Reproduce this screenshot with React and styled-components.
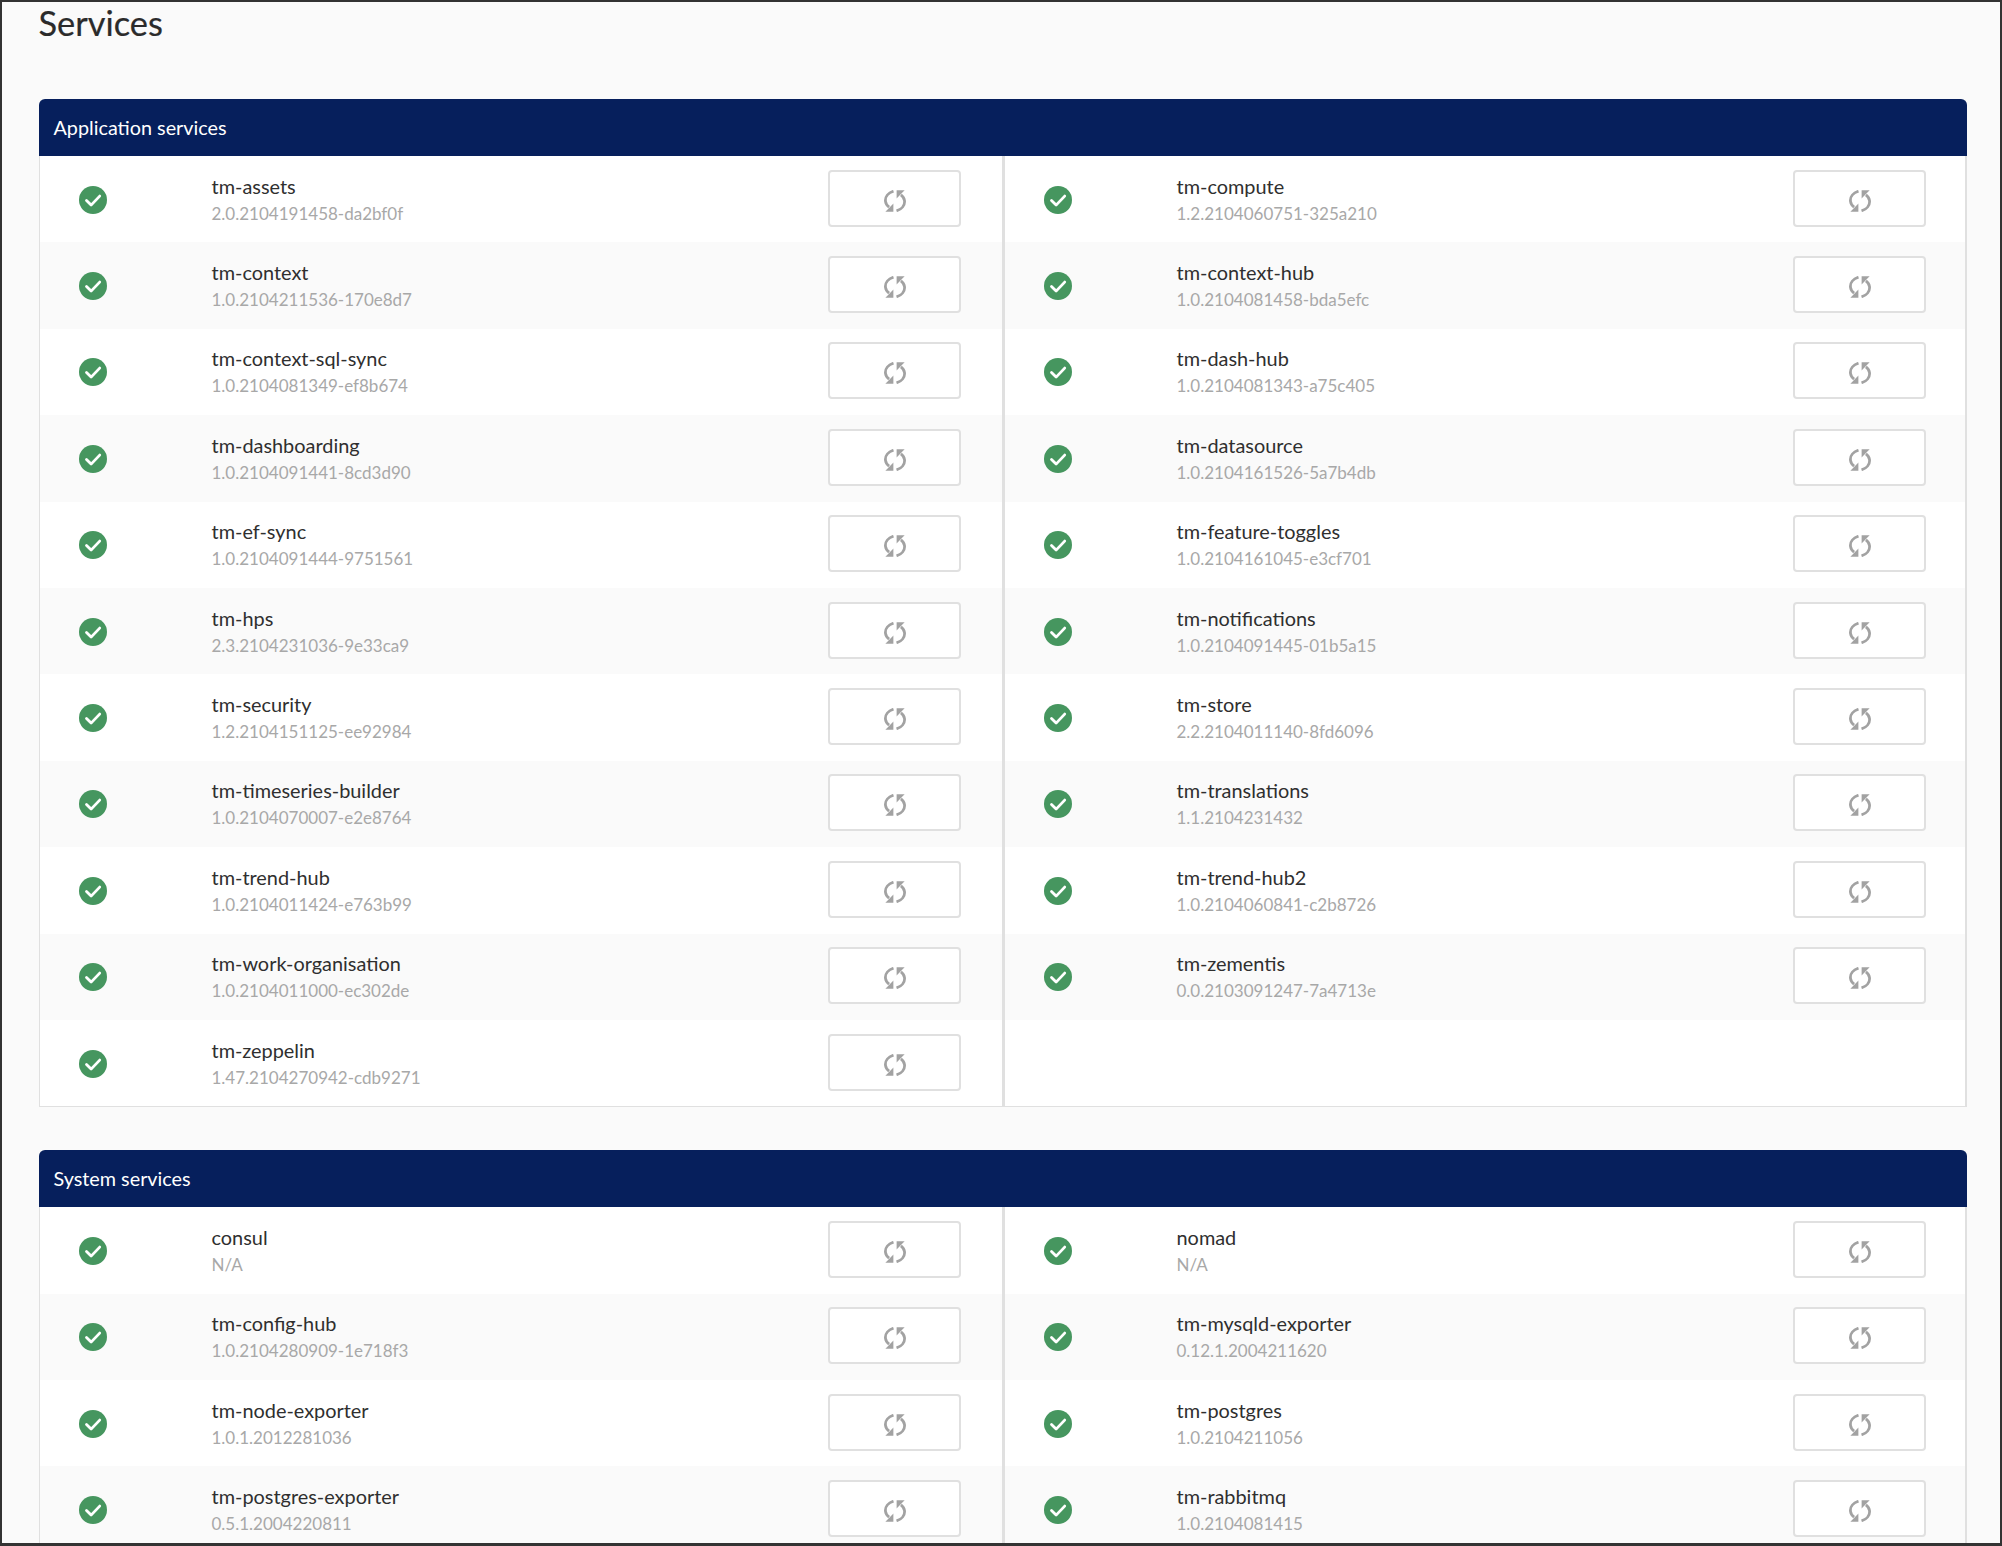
import React from "react";
import styled, { createGlobalStyle } from "styled-components";

const Global = createGlobalStyle`
  html, body, #root { margin: 0; padding: 0; height: 100%; }
  body { font-family: Lato, "Open Sans", sans-serif; background: #fafafa; }
  * { box-sizing: border-box; }
`;

const Frame = styled.div`
  height: 100vh;
  overflow: hidden;
  background: #fafafa;
  border: solid #333333;
  border-width: 2px 2px 3px 2px;
  padding: 0 33px 0 36.5px;
`;

const Title = styled.h1`
  margin: 0 0 61px;
  height: 36px;
  font-size: 34.4px;
  line-height: 42px;
  font-weight: 400;
  color: #2b2b2b;
  -webkit-text-stroke: 0.2px #2b2b2b;
`;

const Panel = styled.section`
  margin-bottom: 43px;
`;

const PanelHeader = styled.header`
  height: 57px;
  display: flex;
  align-items: center;
  padding: 0 0 2px 15px;
  background: #061f5c;
  border-radius: 6px 6px 0 0;
  color: #ffffff;
  font-size: 19.8px;
`;

const PanelBody = styled.div`
  display: grid;
  grid-template-columns: 962px 1fr;
  background: #ffffff;
  border: solid #e0e0e0;
  border-width: 0 2px 1.5px 1.5px;
`;

const Column = styled.div`
  & + & {
    border-left: 3px solid #e0e0e0;
  }
`;

const Row = styled.div`
  height: 86.4px;
  display: flex;
  align-items: center;
  background: ${(p) => (p.$alt ? "#fafafa" : "#ffffff")};
`;

const Status = styled.div`
  flex: none;
  width: 172px;
  padding-left: 39px;
  margin-top: 1px;
  display: flex;
  svg { display: block; }
`;

const Info = styled.div`
  flex: none;
  width: 616.5px;
  margin-top: 2px;
`;

const Name = styled.div`
  font-size: 19.9px;
  line-height: 27px;
  color: #2f2f2f;
`;

const Version = styled.div`
  font-size: 17px;
  line-height: 28px;
  color: #a8a8a8;
`;

const RestartButton = styled.button`
  flex: none;
  width: 132.5px;
  height: 57px;
  margin-top: -2px;
  padding: 5px 0 0 1px;
  display: flex;
  align-items: center;
  justify-content: center;
  background: #ffffff;
  border: 2px solid #e0e0e0;
  border-radius: 4px;
`;

const CheckIcon = () => (
  <svg width="28" height="28" viewBox="0 0 28 28" aria-hidden="true">
    <circle cx="14" cy="14" r="14" fill="#46965f" />
    <path d="M7.5 14.5l4.6 4.6 8.6-9" fill="none" stroke="#ffffff" strokeWidth="2.8" strokeLinecap="round" strokeLinejoin="round" />
  </svg>
);

const RefreshIcon = () => (
  <svg width="22" height="22" viewBox="0 0 22 22" aria-hidden="true">
    <path d="M9.5 1.2C4.4 2.8.9 6.8 1.5 11.4c.3 2.4 1.6 4.3 3.6 5.8" fill="none" stroke="#a2a2a2" strokeWidth="2.8" />
    <path d="M1.4 21.8h8V13.6z" fill="#a2a2a2" />
    <path d="M12.5 20.8c5.1-1.6 8.6-5.6 8-10.2-.3-2.4-1.6-4.3-3.6-5.8" fill="none" stroke="#a2a2a2" strokeWidth="2.8" />
    <path d="M20.6.2h-8V8.4z" fill="#a2a2a2" />
  </svg>
);

const appLeft = [
  ["tm-assets", "2.0.2104191458-da2bf0f"],
  ["tm-context", "1.0.2104211536-170e8d7"],
  ["tm-context-sql-sync", "1.0.2104081349-ef8b674"],
  ["tm-dashboarding", "1.0.2104091441-8cd3d90"],
  ["tm-ef-sync", "1.0.2104091444-9751561"],
  ["tm-hps", "2.3.2104231036-9e33ca9"],
  ["tm-security", "1.2.2104151125-ee92984"],
  ["tm-timeseries-builder", "1.0.2104070007-e2e8764"],
  ["tm-trend-hub", "1.0.2104011424-e763b99"],
  ["tm-work-organisation", "1.0.2104011000-ec302de"],
  ["tm-zeppelin", "1.47.2104270942-cdb9271"],
];
const appRight = [
  ["tm-compute", "1.2.2104060751-325a210"],
  ["tm-context-hub", "1.0.2104081458-bda5efc"],
  ["tm-dash-hub", "1.0.2104081343-a75c405"],
  ["tm-datasource", "1.0.2104161526-5a7b4db"],
  ["tm-feature-toggles", "1.0.2104161045-e3cf701"],
  ["tm-notifications", "1.0.2104091445-01b5a15"],
  ["tm-store", "2.2.2104011140-8fd6096"],
  ["tm-translations", "1.1.2104231432"],
  ["tm-trend-hub2", "1.0.2104060841-c2b8726"],
  ["tm-zementis", "0.0.2103091247-7a4713e"],
];
const sysLeft = [
  ["consul", "N/A"],
  ["tm-config-hub", "1.0.2104280909-1e718f3"],
  ["tm-node-exporter", "1.0.1.2012281036"],
  ["tm-postgres-exporter", "0.5.1.2004220811"],
];
const sysRight = [
  ["nomad", "N/A"],
  ["tm-mysqld-exporter", "0.12.1.2004211620"],
  ["tm-postgres", "1.0.2104211056"],
  ["tm-rabbitmq", "1.0.2104081415"],
];

const ServiceColumn = ({ items }) => (
  <Column>
    {items.map(([name, version], i) => (
      <Row key={name} $alt={i % 2 === 1}>
        <Status><CheckIcon /></Status>
        <Info>
          <Name>{name}</Name>
          <Version>{version}</Version>
        </Info>
        <RestartButton type="button"><RefreshIcon /></RestartButton>
      </Row>
    ))}
  </Column>
);

const ServicePanel = ({ title, left, right }) => (
  <Panel>
    <PanelHeader>{title}</PanelHeader>
    <PanelBody>
      <ServiceColumn items={left} />
      <ServiceColumn items={right} />
    </PanelBody>
  </Panel>
);

export default function App() {
  return (
    <>
      <Global />
      <Frame>
        <Title>Services</Title>
        <ServicePanel title="Application services" left={appLeft} right={appRight} />
        <ServicePanel title="System services" left={sysLeft} right={sysRight} />
      </Frame>
    </>
  );
}
